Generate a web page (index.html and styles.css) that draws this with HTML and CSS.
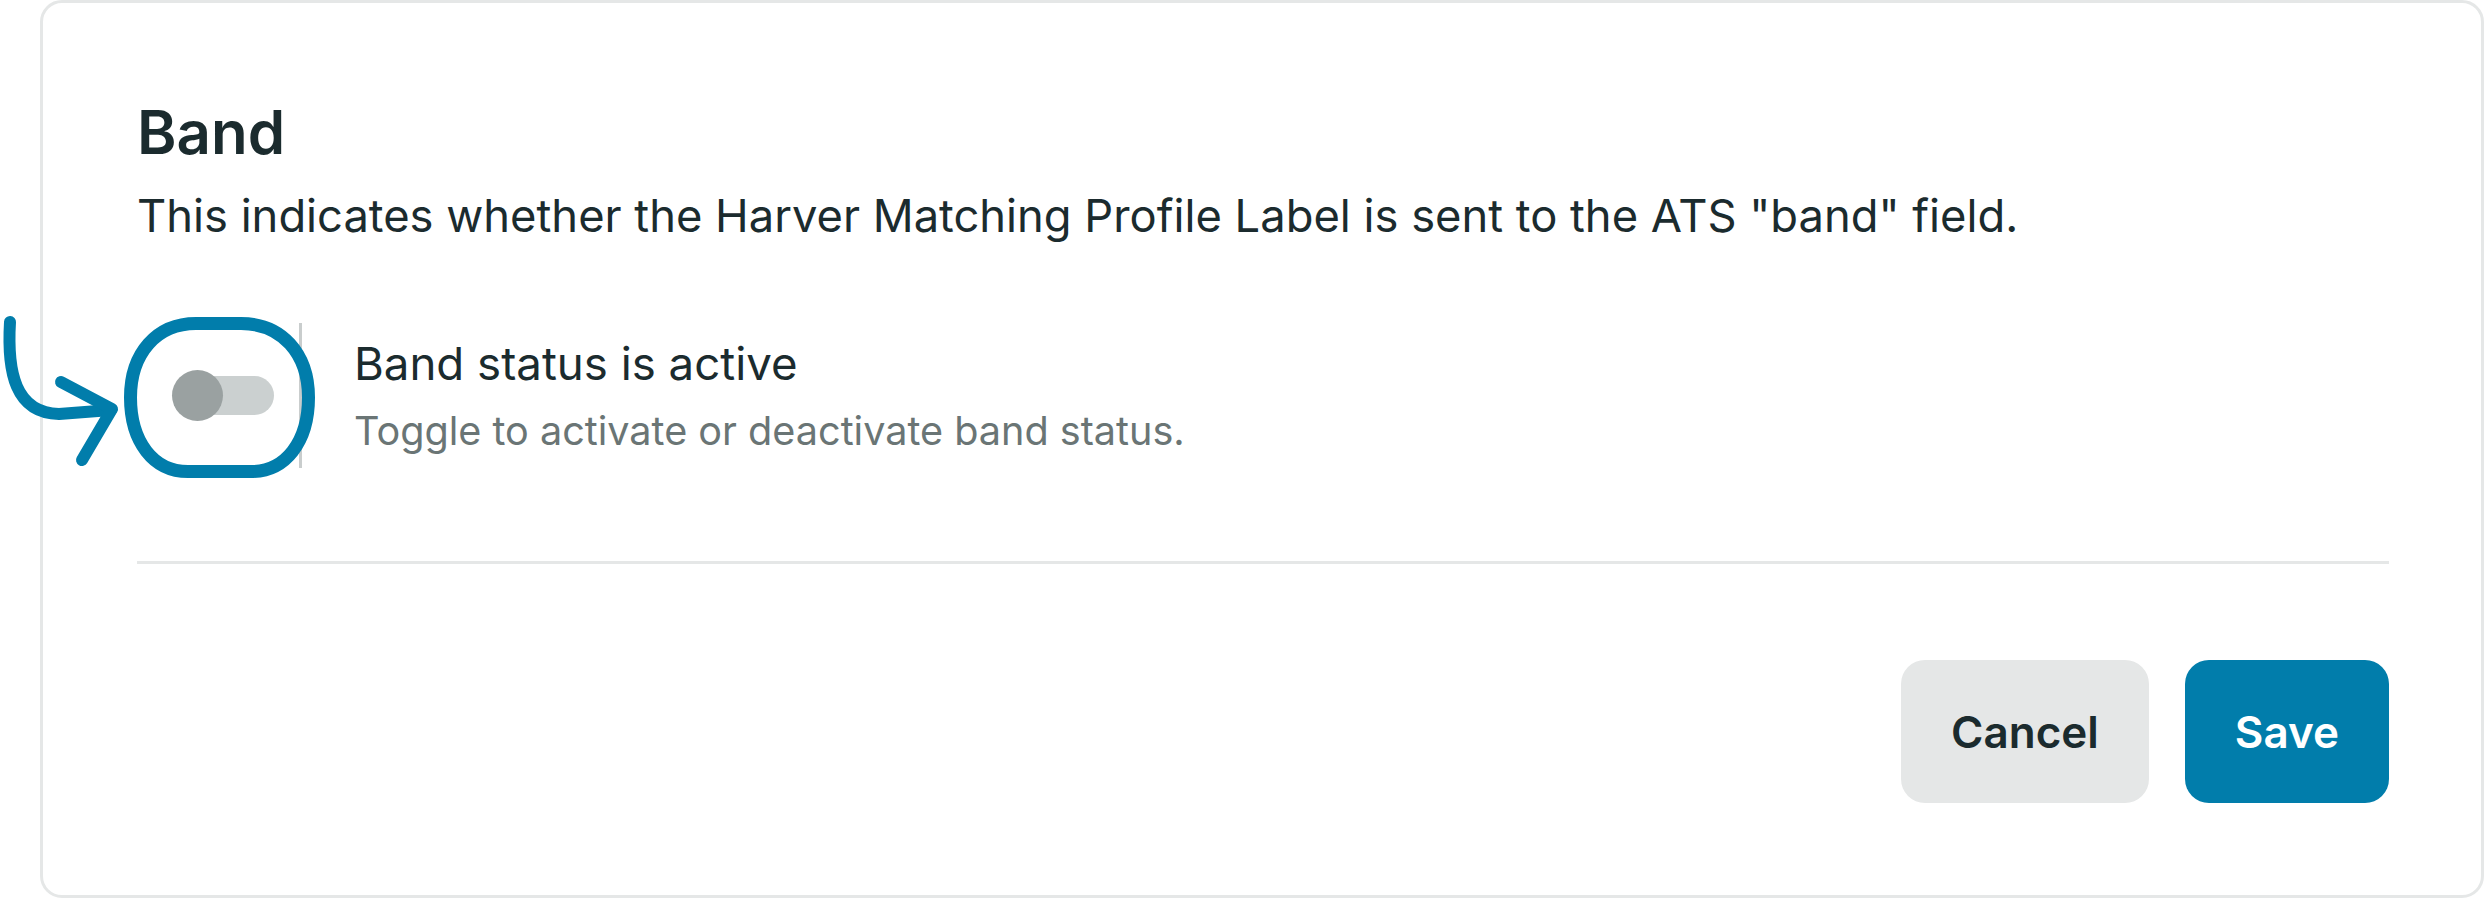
FILE: index.html
```html
<!DOCTYPE html>
<html lang="en">
<head>
  <meta charset="UTF-8">
  <meta name="viewport" content="width=device-width, initial-scale=1.0">
  <title>Band settings</title>
  <link rel="stylesheet" href="styles.css">
</head>
<body>

<div id="band-card" class="card">
  <h2 class="card-title">Band</h2>
  <p class="card-text">This indicates whether the Harver Matching Profile Label is sent to the ATS "band" field.</p>

  <div class="setting-row">
    <div class="toggle-cell">
      <button class="toggle" type="button" aria-pressed="false">
        <span class="toggle-knob"></span>
      </button>
    </div>
    <div class="setting-text">
      <div class="setting-label">Band status is active</div>
      <div class="setting-hint">Toggle to activate or deactivate band status.</div>
    </div>

    <!-- highlight drawn over the toggle -->
    <svg class="highlight" viewBox="0 310 330 180" width="330" height="180">
      <path d="M195 323.5 L240 323.5 C280.5 323.5, 307.5 353.1, 307.5 397.5 C307.5 441.9, 284.5 471.5, 250 471.5 L187 471.5 C152.5 471.5, 129.5 441.9, 129.5 397.5 C129.5 353.1, 155.7 323.5, 195 323.5 Z" fill="none" stroke="#017dab" stroke-width="13"/>
      <path d="M9 322 C6 372, 14 413, 58 414 L110 410" fill="none" stroke="#017dab" stroke-width="12" stroke-linecap="round" stroke-linejoin="round"/>
      <path d="M60 382 L111 409 L81 460" fill="none" stroke="#017dab" stroke-width="12" stroke-linecap="round" stroke-linejoin="round"/>
    </svg>
  </div>

  <hr class="divider">

  <div class="card-actions">
    <button id="cancel-button" class="button button-light" type="button">Cancel</button>
    <button id="save-button" class="button button-primary" type="button">Save</button>
  </div>
</div>

</body>
</html>
```

FILE: styles.css
```css
body {
  margin: 0;
  background-color: #fff;
  color: #1b2b2e;
  font-family: 'Inter', 'Noto Sans', sans-serif;
}

.card {
  box-sizing: border-box;
  width: 2444px;
  height: 898px;
  margin: 0 0 0 40px;
  padding: 93px 92px 93px 94px;
  border: 3px solid #e5e7e7;
  border-radius: 22px;
  background-color: #fff;
}

.card-title {
  margin: 0;
  font-size: 60px;
  line-height: 72px;
  font-weight: 600;
}

.card-text {
  margin: 20px 0 0;
  font-size: 45.3px;
  line-height: 56px;
}

.setting-row {
  position: relative;
  display: flex;
  align-items: center;
  margin-top: 79px;
}

.toggle-cell {
  display: flex;
  align-items: center;
  width: 165px;
  height: 145px;
  padding-left: 39px;
  box-sizing: border-box;
  border-right: 3px solid #c9cdcd;
}

.toggle {
  position: relative;
  width: 98px;
  height: 39px;
  padding: 0;
  border: none;
  border-radius: 20px;
  background-color: #cbd0d0;
  cursor: pointer;
}

.toggle-knob {
  position: absolute;
  left: -4px;
  top: -6px;
  width: 51px;
  height: 51px;
  border-radius: 50%;
  background-color: #9aa1a1;
}

.setting-text {
  padding-left: 52px;
}

.setting-label {
  font-size: 45.6px;
  line-height: 56px;
}

.setting-hint {
  margin-top: 15px;
  font-size: 39.6px;
  line-height: 48px;
  color: #6a7575;
}

.highlight {
  position: absolute;
  left: -136px;
  top: -13px;
  pointer-events: none;
}

.divider {
  height: 3px;
  margin: 93px 0 0;
  border: none;
  background-color: #e5e7e7;
}

.card-actions {
  display: flex;
  justify-content: flex-end;
  gap: 36px;
  margin-top: 96px;
}

.button {
  height: 143px;
  padding: 0 50px;
  border: none;
  border-radius: 24px;
  font-family: inherit;
  font-size: 44px;
  font-weight: 600;
  cursor: pointer;
}

.button-light {
  background-color: #e5e7e7;
  color: #1b2b2e;
}

.button-primary {
  background-color: #017dab;
  color: #fff;
}
```
